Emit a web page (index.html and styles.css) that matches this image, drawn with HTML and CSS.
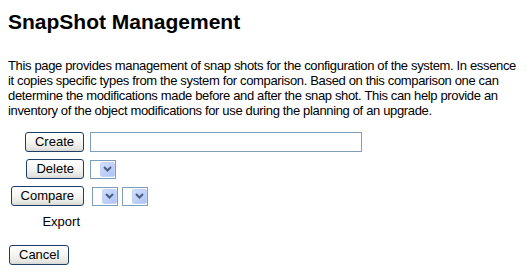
FILE: index.html
```html
<!DOCTYPE html>
<html>
<head>
<meta charset="utf-8">
<title>SnapShot Management</title>
<link rel="stylesheet" href="styles.css">
</head>
<body>
<div class="page">
  <h1 class="title">SnapShot Management</h1>
  <p class="intro">This page provides management of snap shots for the configuration of the system. In essence it copies specific types from the system for comparison. Based on this comparison one can determine the modifications made before and after the snap shot. This can help provide an inventory of the object modifications for use during the planning of an upgrade.</p>
  <div class="form">
    <div class="cell-btn"><button class="btn" type="button">Create</button></div>
    <div class="cell-field"><input class="text-input" type="text"></div>

    <div class="cell-btn"><button class="btn" type="button">Delete</button></div>
    <div class="cell-field">
      <span class="select"><span class="arrow"><svg width="9" height="6" viewBox="0 0 9 6"><path d="M1 1 L4.5 4.5 L8 1" fill="none" stroke="#4a5d82" stroke-width="2"/></svg></span></span>
    </div>

    <div class="cell-btn"><button class="btn" type="button">Compare</button></div>
    <div class="cell-field cell-compare">
      <span class="select"><span class="arrow"><svg width="9" height="6" viewBox="0 0 9 6"><path d="M1 1 L4.5 4.5 L8 1" fill="none" stroke="#4a5d82" stroke-width="2"/></svg></span></span>
      <span class="select"><span class="arrow"><svg width="9" height="6" viewBox="0 0 9 6"><path d="M1 1 L4.5 4.5 L8 1" fill="none" stroke="#4a5d82" stroke-width="2"/></svg></span></span>
    </div>

    <div class="cell-btn cell-label">Export</div>
    <div class="cell-field"></div>
  </div>
  <div class="actions">
    <button class="btn" type="button">Cancel</button>
  </div>
</div>
</body>
</html>
```

FILE: styles.css
```css
html, body {
  margin: 0;
  padding: 0;
  background: #ffffff;
}

body {
  font-family: "Liberation Sans", Arial, sans-serif;
  font-size: 13px;
  color: #000000;
}

.page {
  padding: 10px 8px 0 8px;
}

.title {
  margin: 0;
  font-size: 21px;
  font-weight: bold;
  line-height: 24px;
}

.intro {
  margin: 24px 0 0 0;
  line-height: 15px;
  font-size: 13px;
  letter-spacing: -0.35px;
}

.form {
  margin-top: 14px;
  display: grid;
  grid-template-columns: 76px auto;
  column-gap: 6px;
  row-gap: 7px;
  align-items: center;
}

.cell-btn {
  display: flex;
  justify-content: flex-end;
  height: 20px;
  align-items: center;
}

.cell-field {
  display: flex;
  align-items: center;
  height: 20px;
  gap: 4px;
}

.cell-compare {
  padding-left: 2px;
}

.cell-label {
  padding-right: 4px;
  margin-top: -4px;
}

.btn {
  box-sizing: border-box;
  height: 20px;
  padding: 0 9px;
  margin: 0;
  font-family: "Liberation Sans", Arial, sans-serif;
  font-size: 13px;
  line-height: 18px;
  color: #000000;
  border: 1px solid #1f3d68;
  border-radius: 3px;
  background: linear-gradient(#ffffff 0%, #f6f6f3 45%, #e6e6e2 85%, #d6d6d2 100%);
}

.text-input {
  box-sizing: border-box;
  width: 272px;
  height: 20px;
  margin: 0;
  padding: 0 2px;
  border: 1px solid #7f9db9;
  background: #ffffff;
  font-family: "Liberation Sans", Arial, sans-serif;
  font-size: 13px;
}

.select {
  box-sizing: border-box;
  width: 26px;
  height: 19px;
  border: 1px solid #7f9db9;
  background: #ffffff;
  display: flex;
  justify-content: flex-end;
  align-items: center;
  padding-right: 0;
}

.arrow {
  box-sizing: border-box;
  width: 15px;
  height: 15px;
  border: 1px solid #c3d3f8;
  border-radius: 2px;
  background: linear-gradient(135deg, #d2defc 0%, #bccdf8 60%, #b0c4f4 100%);
  display: flex;
  align-items: center;
  justify-content: center;
}

.arrow svg {
  display: block;
}

.actions {
  margin-top: 12px;
  padding-left: 1px;
}
```
